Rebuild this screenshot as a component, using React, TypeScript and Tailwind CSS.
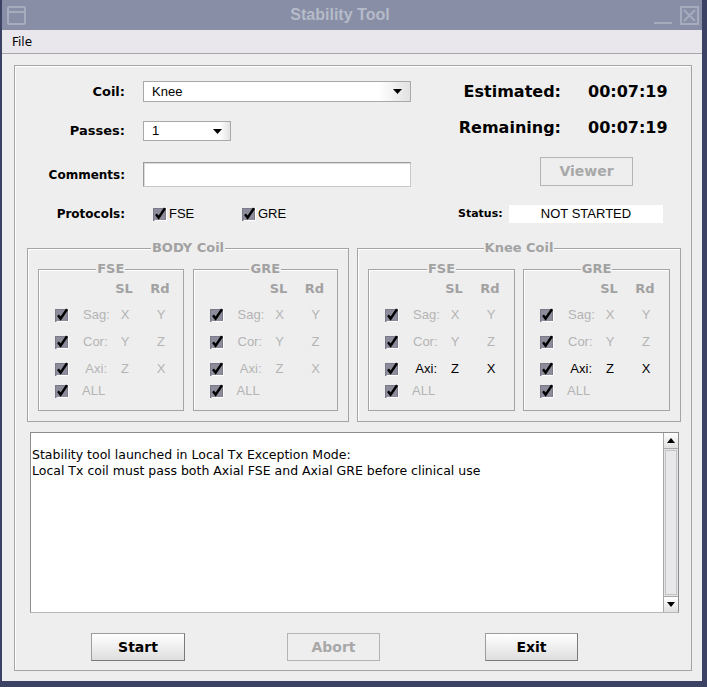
import type { ReactNode } from "react";

const ui = {
  fontFamily: '"DejaVu Sans", "Liberation Sans", sans-serif',
};

const plain = {
  fontFamily: '"Liberation Sans", Arial, sans-serif',
};

function Check() {
  return (
    <svg
      width="14"
      height="14"
      viewBox="0 0 14 14"
      className="shrink-0"
    >
      <rect x="0.5" y="1.5" width="12" height="12" fill="#8c8c9b" stroke="#7a7a8a" />
      <path d="M1.5 13.5 H13.5 V1.5" stroke="#ffffff" fill="none" />
      <path
        d="M3 7.2 L5.6 10.6 L12 1.2"
        stroke="#000"
        strokeWidth="2.4"
        fill="none"
      />
    </svg>
  );
}

function Arrow() {
  return (
    <svg width="9" height="5" viewBox="0 0 9 5">
      <path d="M0 0 H9 L4.5 5 Z" fill="#000" />
    </svg>
  );
}

function Select({ value, width }: { value: string; width: string }) {
  return (
    <div
      className={`flex h-full ${width} items-center border border-[#a9a9a9] bg-[linear-gradient(to_right,#ffffff_0%,#ffffff_88%,#e2e2e2_100%)] pl-[8px] pr-[8px]`}
    >
      <span className="flex-1 text-[13px] text-black" style={plain}>
        {value}
      </span>
      <Arrow />
    </div>
  );
}

function Button({
  label,
  disabled,
  className,
}: {
  label: string;
  disabled?: boolean;
  className?: string;
}) {
  return (
    <div
      className={`flex items-center justify-center border text-[14px] font-bold ${
        disabled
          ? "border-[#b4b4b4] bg-[#eeeeee] text-[#a8a8a8]"
          : "border-[#9d9d9d] border-b-[#7a7a7a] border-r-[#7a7a7a] bg-[linear-gradient(to_bottom,#ffffff,#dedede)] text-black"
      } ${className ?? ""}`}
    >
      {label}
    </div>
  );
}

function GroupBox({
  title,
  children,
  className,
}: {
  title: string;
  children: ReactNode;
  className?: string;
}) {
  return (
    <div
      className={`border border-[#a4a4a4] shadow-[inset_1px_1px_0_#ffffff] ${className ?? ""}`}
    >
      <div className="-mt-[9px] flex h-[16px] justify-center">
        <span className="bg-[#eeeeee] px-[1px] text-[13px] leading-[16px] font-bold text-[#a2a2a2]">
          {title}
        </span>
      </div>
      {children}
    </div>
  );
}

type Row = {
  name: string;
  sl: string;
  rd: string;
};

const rows: Row[] = [
  { name: "Sag:", sl: "X", rd: "Y" },
  { name: "Cor:", sl: "Y", rd: "Z" },
  { name: "Axi:", sl: "Z", rd: "X" },
];

function SeqBox({
  title,
  activeAxi,
}: {
  title: string;
  activeAxi?: boolean;
}) {
  return (
    <GroupBox title={title} className="flex-1 pb-[10px]">
      <div className="flex h-[24px] items-center pl-[16px] text-[13px] font-bold text-[#a2a2a2]">
        <span className="w-[12px]" />
        <span className="ml-[15px] w-[24px]" />
        <span className="ml-[6px] w-[24px] text-center">SL</span>
        <span className="ml-[12px] w-[24px] text-center">Rd</span>
      </div>

      {rows.map((row) => {
        const on = activeAxi && row.name === "Axi:";

        return (
          <div
            key={row.name}
            className={`flex h-[27px] items-center pl-[16px] text-[13px] ${
              on ? "text-black" : "text-[#b4b4b4]"
            }`}
            style={plain}
          >
            <Check />
            <span className="ml-[14px] w-[24px] text-right">
              {row.name}
            </span>
            <span className="ml-[6px] w-[24px] text-center">
              {row.sl}
            </span>
            <span className="ml-[12px] w-[24px] text-center">
              {row.rd}
            </span>
          </div>
        );
      })}

      <div
        className="flex h-[18px] items-center pl-[16px] text-[13px] text-[#b4b4b4]"
        style={plain}
      >
        <Check />
        <span className="ml-[13px]">ALL</span>
      </div>
    </GroupBox>
  );
}

export default function App() {
  return (
    <div
      className="flex h-[687px] w-[707px] flex-col bg-[#3b4263] pl-[2px] pr-[5px] pb-[6px]"
      style={ui}
    >
      {/* title bar */}
      <div className="flex h-[30px] items-center bg-[#878ea6] pl-[5px] pr-[3px]">
        <div className="flex h-[19px] w-[19px] flex-col rounded-[2px] border-2 border-[#a6abbd]">
          <div className="mt-[3px] h-[2px] bg-[#a6abbd]" />
        </div>

        <div
          className="flex-1 text-center text-[16px] font-bold text-[#b6bbc9]"
          style={plain}
        >
          Stability Tool
        </div>

        <div className="mt-[16px] h-[2px] w-[18px] bg-[#a6abbd]" />

        <div className="ml-[8px] flex h-[19px] w-[19px] items-center justify-center border-2 border-[#a6abbd]">
          <svg width="13" height="13" viewBox="0 0 13 13">
            <path
              d="M1 1 L12 12 M12 1 L1 12"
              stroke="#a6abbd"
              strokeWidth="2"
            />
          </svg>
        </div>
      </div>

      {/* menu */}
      <div className="flex h-[24px] items-center border-b border-[#a8a8ac] bg-[#e9e7ec] pl-[10px] text-[12px] text-black">
        File
      </div>

      {/* body */}
      <div className="flex flex-1 flex-col bg-[#eeeeee] pt-[11px] pl-[12px] pr-[10px] pb-[10px]">
        <div className="flex flex-1 flex-col border border-[#a4a4a4] shadow-[inset_1px_1px_0_#ffffff]">
          <div className="flex">
            {/* left fields */}
            <div className="flex w-[415px] flex-col pt-[15px]">
              <div className="flex h-[21px] items-center gap-[18px]">
                <span className="w-[110px] text-right text-[13px] font-bold">
                  Coil:
                </span>
                <Select value="Knee" width="w-[268px]" />
              </div>

              <div className="mt-[19px] flex h-[20px] items-center gap-[18px]">
                <span className="w-[110px] text-right text-[13px] font-bold">
                  Passes:
                </span>
                <Select value="1" width="w-[88px]" />
              </div>

              <div className="mt-[21px] flex h-[25px] items-center gap-[18px]">
                <span className="w-[110px] text-right text-[12px] font-bold">
                  Comments:
                </span>
                <div className="h-full w-[268px] border border-[#9a9a9a] border-b-[#c8c8c8] border-r-[#c8c8c8] bg-white shadow-[inset_1px_1px_0_#dcdcdc]" />
              </div>

              <div className="mt-[18px] flex h-[18px] items-center gap-[18px]">
                <span className="w-[110px] text-right text-[12px] font-bold">
                  Protocols:
                </span>
                <div
                  className="flex items-center text-[13px] text-black"
                  style={plain}
                >
                  <span className="ml-[10px]">
                    <Check />
                  </span>
                  <span className="ml-[2px] w-[73px]">FSE</span>
                  <Check />
                  <span className="ml-[2px]">GRE</span>
                </div>
              </div>
            </div>

            {/* right status */}
            <div className="flex flex-1 flex-col pt-[16px]">
              <div className="flex h-[20px] items-center gap-[27px] text-[16px] font-bold">
                <span className="w-[131px] text-right">Estimated:</span>
                <span>00:07:19</span>
              </div>

              <div className="mt-[16px] flex h-[20px] items-center gap-[27px] text-[16px] font-bold">
                <span className="w-[131px] text-right">Remaining:</span>
                <span>00:07:19</span>
              </div>

              <Button
                label="Viewer"
                disabled
                className="mt-[19px] ml-[110px] h-[29px] w-[93px]"
              />

              <div className="mt-[19px] ml-[28px] flex h-[18px] items-center gap-[8px]">
                <span className="w-[43px] text-[11px] font-bold">
                  Status:
                </span>
                <div
                  className="flex h-full w-[154px] items-center justify-center bg-white text-[13px] text-black"
                  style={plain}
                >
                  NOT STARTED
                </div>
              </div>
            </div>
          </div>

          {/* coil groups */}
          <div className="mt-[25px] mr-[10px] ml-[12px] flex gap-[8px]">
            <GroupBox
              title="BODY Coil"
              className="w-[322px] pb-[10px]"
            >
              <div className="mt-[13px] flex gap-[9px] px-[10px]">
                <SeqBox title="FSE" />
                <SeqBox title="GRE" />
              </div>
            </GroupBox>

            <GroupBox
              title="Knee Coil"
              className="flex-1 pb-[10px]"
            >
              <div className="mt-[13px] flex gap-[8px] px-[10px]">
                <SeqBox title="FSE" activeAxi />
                <SeqBox title="GRE" activeAxi />
              </div>
            </GroupBox>
          </div>

          {/* log */}
          <div className="mt-[10px] mr-[12px] ml-[15px] flex h-[181px] border border-[#8c8c8c] border-b-[#b8b8b8]">
            <div className="flex-1 bg-white pt-[14px] pl-[1px] text-[12.5px] leading-[16px] text-black">
              <div>Stability tool launched in Local Tx Exception Mode:</div>
              <div>
                Local Tx coil must pass both Axial FSE and Axial GRE before
                clinical use
              </div>
            </div>

            <div className="flex w-[15px] flex-col border-l border-[#a8a8a8] bg-[#e4e4e6]">
              <div className="flex h-[16px] items-center justify-center border-b border-[#a8a8a8] bg-[linear-gradient(to_bottom,#ffffff,#e0e0e0)]">
                <svg width="8" height="5" viewBox="0 0 8 5">
                  <path d="M0 5 H8 L4 0 Z" fill="#000" />
                </svg>
              </div>
              <div className="mx-[1px] my-[1px] flex-1 border border-[#c4c4c4] bg-[#e8e8ea]" />
              <div className="flex h-[16px] items-center justify-center border-t border-[#a8a8a8] bg-[linear-gradient(to_bottom,#ffffff,#e0e0e0)]">
                <svg width="8" height="5" viewBox="0 0 8 5">
                  <path d="M0 0 H8 L4 5 Z" fill="#000" />
                </svg>
              </div>
            </div>
          </div>

          {/* buttons */}
          <div className="mt-[20px] mb-[9px] flex h-[28px] pl-[76px]">
            <Button label="Start" className="w-[94px]" />
            <Button
              label="Abort"
              disabled
              className="ml-[102px] w-[93px]"
            />
            <Button label="Exit" className="ml-[105px] w-[93px]" />
          </div>
        </div>
      </div>
    </div>
  );
}
